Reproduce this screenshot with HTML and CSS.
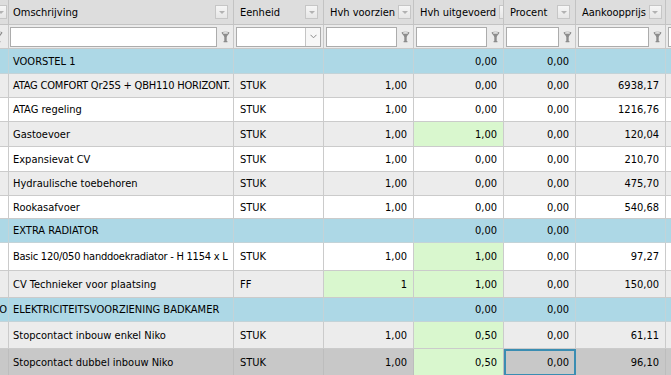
FILE: index.html
```html
<!DOCTYPE html>
<html lang="nl">
<head>
<meta charset="utf-8">
<title>Grid</title>
<link rel="stylesheet" href="styles.css">
</head>
<body>
<div class="grid">
  <div class="row head">
    <div class="cell stub"><span class="ddbtn"></span></div>
    <div class="cell first"><span class="htext">Omschrijving</span><span class="ddbtn"></span></div>
    <div class="cell"><span class="htext">Eenheid</span><span class="ddbtn"></span></div>
    <div class="cell"><span class="htext">Hvh voorzien</span><span class="ddbtn"></span></div>
    <div class="cell"><span class="htext">Hvh uitgevoerd</span><span class="ddbtn"></span></div>
    <div class="cell"><span class="htext">Procent</span><span class="ddbtn"></span></div>
    <div class="cell"><span class="htext">Aankoopprijs</span><span class="ddbtn"></span></div>
    <div class="cell tail"></div>
  </div>
  <div class="row filter">
    <div class="cell stub"><svg class="funnel" width="9" height="12" viewBox="0 0 9 12"><path d="M0.6 1.6C0.6 0.4 8.4 0.4 8.4 1.6C8.4 3.2 5.7 4.6 5.7 6.2V10H6.4V11.2H2.6V10H3.3V6.2C3.3 4.6 0.6 3.2 0.6 1.6Z" fill="#8c8c8c"/><ellipse cx="4.5" cy="1.9" rx="2.7" ry="0.9" fill="#e2e2e2"/></svg></div>
    <div class="cell first"><input class="finput" type="text"><svg class="funnel" width="9" height="12" viewBox="0 0 9 12"><path d="M0.6 1.6C0.6 0.4 8.4 0.4 8.4 1.6C8.4 3.2 5.7 4.6 5.7 6.2V10H6.4V11.2H2.6V10H3.3V6.2C3.3 4.6 0.6 3.2 0.6 1.6Z" fill="#8c8c8c"/><ellipse cx="4.5" cy="1.9" rx="2.7" ry="0.9" fill="#e2e2e2"/></svg></div>
    <div class="cell"><span class="fselect"><span class="fsel-arrow"><svg width="7" height="5" viewBox="0 0 7 5"><polyline points="0.5,0.8 3.5,3.8 6.5,0.8" fill="none" stroke="#8a8a8a" stroke-width="1"/></svg></span></span></div>
    <div class="cell"><input class="finput" type="text"><svg class="funnel" width="9" height="12" viewBox="0 0 9 12"><path d="M0.6 1.6C0.6 0.4 8.4 0.4 8.4 1.6C8.4 3.2 5.7 4.6 5.7 6.2V10H6.4V11.2H2.6V10H3.3V6.2C3.3 4.6 0.6 3.2 0.6 1.6Z" fill="#8c8c8c"/><ellipse cx="4.5" cy="1.9" rx="2.7" ry="0.9" fill="#e2e2e2"/></svg></div>
    <div class="cell"><input class="finput" type="text"><svg class="funnel" width="9" height="12" viewBox="0 0 9 12"><path d="M0.6 1.6C0.6 0.4 8.4 0.4 8.4 1.6C8.4 3.2 5.7 4.6 5.7 6.2V10H6.4V11.2H2.6V10H3.3V6.2C3.3 4.6 0.6 3.2 0.6 1.6Z" fill="#8c8c8c"/><ellipse cx="4.5" cy="1.9" rx="2.7" ry="0.9" fill="#e2e2e2"/></svg></div>
    <div class="cell"><input class="finput" type="text"><svg class="funnel" width="9" height="12" viewBox="0 0 9 12"><path d="M0.6 1.6C0.6 0.4 8.4 0.4 8.4 1.6C8.4 3.2 5.7 4.6 5.7 6.2V10H6.4V11.2H2.6V10H3.3V6.2C3.3 4.6 0.6 3.2 0.6 1.6Z" fill="#8c8c8c"/><ellipse cx="4.5" cy="1.9" rx="2.7" ry="0.9" fill="#e2e2e2"/></svg></div>
    <div class="cell"><input class="finput" type="text"><svg class="funnel" width="9" height="12" viewBox="0 0 9 12"><path d="M0.6 1.6C0.6 0.4 8.4 0.4 8.4 1.6C8.4 3.2 5.7 4.6 5.7 6.2V10H6.4V11.2H2.6V10H3.3V6.2C3.3 4.6 0.6 3.2 0.6 1.6Z" fill="#8c8c8c"/><ellipse cx="4.5" cy="1.9" rx="2.7" ry="0.9" fill="#e2e2e2"/></svg></div>
    <div class="cell tail"><input class="finput" type="text"></div>
  </div>

  <div class="row data grp">
    <div class="cell stub"></div>
    <div class="cell first">VOORSTEL 1</div>
    <div class="cell"></div>
    <div class="cell"></div>
    <div class="cell num">0,00</div>
    <div class="cell num">0,00</div>
    <div class="cell"></div>
    <div class="cell tail"></div>
  </div>
  <div class="row data alt">
    <div class="cell stub"></div>
    <div class="cell first tight">ATAG COMFORT Qr25S + QBH110 HORIZONT.</div>
    <div class="cell">STUK</div>
    <div class="cell num">1,00</div>
    <div class="cell num">0,00</div>
    <div class="cell num">0,00</div>
    <div class="cell num">6938,17</div>
    <div class="cell tail"></div>
  </div>
  <div class="row data">
    <div class="cell stub"></div>
    <div class="cell first">ATAG regeling</div>
    <div class="cell">STUK</div>
    <div class="cell num">1,00</div>
    <div class="cell num">0,00</div>
    <div class="cell num">0,00</div>
    <div class="cell num">1216,76</div>
    <div class="cell tail"></div>
  </div>
  <div class="row data alt">
    <div class="cell stub"></div>
    <div class="cell first">Gastoevoer</div>
    <div class="cell">STUK</div>
    <div class="cell num">1,00</div>
    <div class="cell num green">1,00</div>
    <div class="cell num">0,00</div>
    <div class="cell num">120,04</div>
    <div class="cell tail"></div>
  </div>
  <div class="row data">
    <div class="cell stub"></div>
    <div class="cell first">Expansievat CV</div>
    <div class="cell">STUK</div>
    <div class="cell num">1,00</div>
    <div class="cell num">0,00</div>
    <div class="cell num">0,00</div>
    <div class="cell num">210,70</div>
    <div class="cell tail"></div>
  </div>
  <div class="row data alt">
    <div class="cell stub"></div>
    <div class="cell first">Hydraulische toebehoren</div>
    <div class="cell">STUK</div>
    <div class="cell num">1,00</div>
    <div class="cell num">0,00</div>
    <div class="cell num">0,00</div>
    <div class="cell num">475,70</div>
    <div class="cell tail"></div>
  </div>
  <div class="row data">
    <div class="cell stub"></div>
    <div class="cell first">Rookasafvoer</div>
    <div class="cell">STUK</div>
    <div class="cell num">1,00</div>
    <div class="cell num">0,00</div>
    <div class="cell num">0,00</div>
    <div class="cell num">540,68</div>
    <div class="cell tail"></div>
  </div>
  <div class="row data grp">
    <div class="cell stub"></div>
    <div class="cell first">EXTRA RADIATOR</div>
    <div class="cell"></div>
    <div class="cell"></div>
    <div class="cell num">0,00</div>
    <div class="cell num">0,00</div>
    <div class="cell"></div>
    <div class="cell tail"></div>
  </div>
  <div class="row data">
    <div class="cell stub"></div>
    <div class="cell first tighter">Basic 120/050 handdoekradiator - H 1154 x L</div>
    <div class="cell">STUK</div>
    <div class="cell num">1,00</div>
    <div class="cell num green">1,00</div>
    <div class="cell num">0,00</div>
    <div class="cell num">97,27</div>
    <div class="cell tail"></div>
  </div>
  <div class="row data alt">
    <div class="cell stub"></div>
    <div class="cell first">CV Technieker voor plaatsing</div>
    <div class="cell">FF</div>
    <div class="cell num green">1</div>
    <div class="cell num green">1,00</div>
    <div class="cell num">0,00</div>
    <div class="cell num">150,00</div>
    <div class="cell tail"></div>
  </div>
  <div class="row data grp">
    <div class="cell stub clipped">O</div>
    <div class="cell first">ELEKTRICITEITSVOORZIENING BADKAMER</div>
    <div class="cell"></div>
    <div class="cell"></div>
    <div class="cell num">0,00</div>
    <div class="cell num">0,00</div>
    <div class="cell"></div>
    <div class="cell tail"></div>
  </div>
  <div class="row data alt">
    <div class="cell stub"></div>
    <div class="cell first">Stopcontact inbouw enkel Niko</div>
    <div class="cell">STUK</div>
    <div class="cell num">1,00</div>
    <div class="cell num green">0,50</div>
    <div class="cell num">0,00</div>
    <div class="cell num">61,11</div>
    <div class="cell tail"></div>
  </div>
  <div class="row data sel">
    <div class="cell stub"></div>
    <div class="cell first">Stopcontact dubbel inbouw Niko</div>
    <div class="cell">STUK</div>
    <div class="cell num">1,00</div>
    <div class="cell num green">0,50</div>
    <div class="cell num focus">0,00</div>
    <div class="cell num">96,10</div>
    <div class="cell tail"></div>
  </div>
</div>
</body>
</html>
```

FILE: styles.css
```css
html, body {
  margin: 0;
  padding: 0;
  height: 100%;
  overflow: hidden;
  background: #ffffff;
}

body {
  font-family: "DejaVu Sans Condensed", "DejaVu Sans", sans-serif;
  font-stretch: condensed;
  font-size: 11px;
  color: #000000;
}

.grid {
  display: grid;
  grid-template-rows: 25px 24px 25px 24px 24px 25px 25px 24px 23px 24px 28px 27px 24px 27px 27px;
  height: 375px;
  width: 671px;
}

.row {
  display: grid;
  grid-template-columns: 9px 225px 90px 90px 90px 72px 90px 5px;
  min-height: 0;
}

.cell {
  box-sizing: border-box;
  border-right: 1px solid #cbcbcb;
  border-bottom: 1px solid #cbcbcb;
  display: flex;
  align-items: center;
  overflow: hidden;
  white-space: nowrap;
  min-width: 0;
}

.cell.tail {
  border-right: 0;
}

/* header */
.head .cell {
  background: #dddddd;
  border-color: #c3c3c3;
  padding: 0 5px 0 6px;
  justify-content: space-between;
}

.head .cell.first {
  padding-left: 4px;
}

.head .cell.stub {
  padding: 0 1px 0 0;
  justify-content: flex-end;
}

.htext {
  flex: none;
}

.ddbtn {
  flex: none;
  box-sizing: border-box;
  width: 13px;
  height: 14px;
  margin-left: 3px;
  border: 1px solid #c6c6c6;
  background: linear-gradient(#f6f6f6, #e6e6e6);
  display: flex;
  align-items: center;
  justify-content: center;
}

.ddbtn::after {
  content: "";
  border-left: 3px solid transparent;
  border-right: 3px solid transparent;
  border-top: 3px solid #b2b2b2;
  margin-top: 1px;
}

/* filter row */
.filter .cell {
  background: #ebebeb;
  border-color: #c8c8c8;
  padding: 0 3px 0 2px;
  gap: 4px;
}

.filter .cell.first {
  padding-left: 1px;
}

.filter .cell.stub {
  padding: 0;
  justify-content: flex-end;
}

.filter .cell.stub .funnel {
  margin-right: 5px;
}

.finput {
  flex: 1 1 auto;
  min-width: 0;
  width: 10px;
  height: 20px;
  box-sizing: border-box;
  margin: 0;
  padding: 0 2px;
  border: 1px solid #acacac;
  background: #ffffff;
  font: inherit;
  outline: none;
}

.funnel {
  flex: none;
  display: block;
}

.fselect {
  flex: 1 1 auto;
  height: 20px;
  box-sizing: border-box;
  border: 1px solid #acacac;
  background: #ffffff;
  display: flex;
  justify-content: flex-end;
  margin-right: -1px;
}

.fsel-arrow {
  width: 14px;
  border-left: 1px solid #c4c4c4;
  background: #f7f7f7;
  display: flex;
  align-items: center;
  justify-content: center;
}

/* data rows */
.data .cell {
  background: #ffffff;
  padding: 0 6px;
}

.data .cell.first {
  padding-left: 4px;
}

.data .cell.first.tight {
  padding-right: 0;
  letter-spacing: -0.2px;
}

.data .cell.first.tighter {
  padding-right: 0;
  letter-spacing: -0.25px;
}

.data .cell.stub,
.data .cell.tail {
  padding: 0;
}

.data .cell.num {
  justify-content: flex-end;
}

.data.alt .cell {
  background: #ececec;
}

.data.grp .cell {
  background: #add8e6;
  border-color: #c3d3d8;
}

.data .cell.stub.clipped {
  justify-content: flex-end;
  padding-right: 1px;
}

.data.sel .cell {
  background: #c8c8c8;
  border-color: #bdbdbd;
}

.data .cell.green,
.data.alt .cell.green,
.data.sel .cell.green {
  background: #d9f7ce;
}

.data.sel .cell.focus {
  border: 2px solid #3a8db2;
  padding-right: 5px;
}
```
